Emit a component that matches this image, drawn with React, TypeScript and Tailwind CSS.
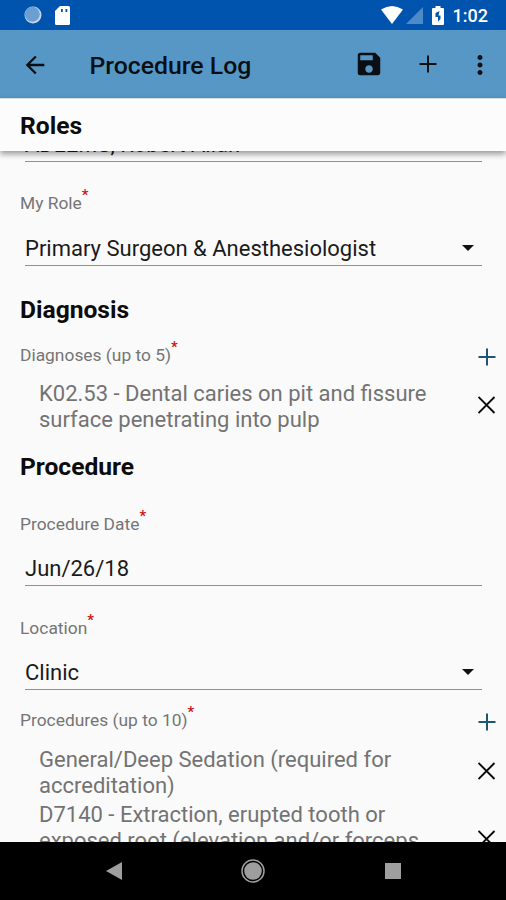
import React from 'react';
import { MdArrowBack, MdSave, MdMoreVert } from 'react-icons/md';

const PlusIcon = ({ className }: { className: string }) => (
  <svg viewBox="0 0 18 18" className={className} stroke="currentColor" strokeWidth="2">
    <path d="M9 .5v17M.5 9h17" />
  </svg>
);

const CloseIcon = () => (
  <svg viewBox="0 0 18 18" className="-mt-px mb-px w-[18px] h-[18px]" stroke="#0c0c0c" strokeWidth="1.9">
    <path d="M.5 1l16 16M16.500 1l-16 16" />
  </svg>
);

const SectionTitle = ({ children }: { children: React.ReactNode }) => (
  <h2 className="-ml-px text-[24.6px] leading-[28px] font-bold text-[#0c0c0c]">{children}</h2>
);

const Label = ({ children }: { children: React.ReactNode }) => (
  <div className="-ml-px flex h-5 text-[17.4px] leading-5 text-[#757575]">
    <span>{children}</span>
    <span className="-mt-2 text-[15px] leading-5 font-medium text-[#d01010]">*</span>
  </div>
);

const Field = ({ value, select }: { value: string; select?: boolean }) => (
  <div className="ml-1 mr-6 flex h-[35px] items-start justify-between border-b border-[#8f8f8f] text-[22px] leading-[35px] text-[#1a1a1a]">
    <span>{value}</span>
    {select && (
      <svg viewBox="0 0 12 6" className="mt-[14px] mr-2 w-3 h-1.5">
        <path d="M0 0h12L6 6z" fill="#111" />
      </svg>
    )}
  </div>
);

const Item = ({ lines }: { lines: string[] }) => (
  <div className="flex items-center justify-between pl-[18px] pr-[10px] text-[22px] leading-[26px] text-[#737373]">
    <div className="mt-px -mb-px whitespace-nowrap">
      {lines.map((line) => (
        <p key={line}>{line}</p>
      ))}
    </div>
    <CloseIcon />
  </div>
);

const ListLabel = ({ children }: { children: React.ReactNode }) => (
  <div className="flex h-5 items-end justify-between pr-[10px]">
    <Label>{children}</Label>
    <PlusIcon className="-mb-px w-[18px] h-[18px] text-[#1f5570]" />
  </div>
);

const StatusBar = () => (
  <div className="flex h-[30px] shrink-0 items-center bg-[#0054ae] text-white">
    <svg viewBox="0 0 18 18" className="ml-[23.5px] w-[18px] h-[18px]">
      <circle cx="9" cy="9" r="8.5" fill="#c4d8ee" />
      <circle cx="8.3" cy="8.3" r="7.5" fill="#6b9fd3" />
    </svg>
    <svg viewBox="0 0 15 19" className="ml-[13px] w-[15px] h-[19px]">
      <path d="M5 0h8.500q1.500 0 1.500 1.500v16q0 1.500-1.500 1.500h-12q-1.500 0-1.500-1.500V5z" fill="#fff" />
      <path d="M6 3h1.800v3H6zM10.500 3h1.800v3h-1.800z" fill="#0054ae" />
    </svg>
    <svg viewBox="0 0 22 18" className="ml-auto w-[22px] h-[18px]">
      <path d="M0 3.500Q11-3.500 22 3.500L11 18z" fill="#fff" />
    </svg>
    <svg viewBox="0 0 17 17" className="ml-[3px] mt-px w-[17px] h-[17px]">
      <path d="M17 0v17H0z" fill="#4d8ac8" />
    </svg>
    <svg viewBox="0 0 12 19" className="ml-[9px] w-3 h-[19px]">
      <path d="M3.500 0h5v2H11q1 0 1 1v15q0 1-1 1H1q-1 0-1-1V3q0-1 1-1h2.500z" fill="#fff" />
      <path d="M7.500 5L3.500 7v4h2.500v4.500L8.500 13V9.500H6.500z" fill="#0054ae" />
    </svg>
    <span className="mt-0.5 ml-[9px] mr-[18px] text-[18px] leading-none font-medium">1:02</span>
  </div>
);

const AppBar = () => (
  <header className="flex h-[68px] shrink-0 items-center bg-[#5797c6] text-[#0a0f14]">
    <MdArrowBack className="ml-[21px] mt-0.5 w-[28px] h-[28px]" />
    <h1 className="ml-[40.5px] mt-[5px] text-[24.8px] leading-none font-medium">Procedure Log</h1>
    <MdSave className="ml-auto w-[30px] h-[30px]" />
    <PlusIcon className="ml-[35px] mr-[7px] w-[18px] h-[18px]" />
    <MdMoreVert className="ml-[21px] mr-[11px] mt-px w-[30px] h-[30px]" />
  </header>
);

const NavBar = () => (
  <nav className="flex h-[58px] shrink-0 items-center bg-black">
    <svg viewBox="0 0 16 18" className="ml-[105.500px] w-4 h-[18px]">
      <path d="M16 0v18L0 9z" fill="#9e9e9e" />
    </svg>
    <svg viewBox="0 0 24 24" className="ml-[119.500px] w-6 h-6">
      <circle cx="12" cy="12" r="11" fill="none" stroke="#9e9e9e" strokeWidth="1.5" />
      <circle cx="12" cy="12" r="8.800" fill="#9e9e9e" />
    </svg>
    <div className="ml-[120px] h-4 w-4 bg-[#9e9e9e]" />
  </nav>
);

const App: React.FC = () => {
  return (
    <div className="flex h-[900px] w-[506px] flex-col overflow-hidden bg-[#fafafa] font-['Roboto',sans-serif]">
      <StatusBar />
      <AppBar />
      <div className="z-10 flex h-[53px] shrink-0 items-center border-t border-[#d5dde2] bg-[#fcfcfc] pl-[21px] pt-0.5 shadow-[0_3px_6px_rgba(0,0,0,0.4)]">
        <SectionTitle>Roles</SectionTitle>
      </div>
      <main className="min-h-0 flex-1 overflow-hidden pl-[21px]">
        <div className="-mt-[24px]">
          <Field value="ADLEMS, Robert Allan" />
        </div>
        <div className="mt-[31px]">
          <Label>My Role</Label>
        </div>
        <div className="mt-[18px]">
          <Field value="Primary Surgeon & Anesthesiologist" select />
        </div>
        <div className="mt-[30px]">
          <SectionTitle>Diagnosis</SectionTitle>
        </div>
        <div className="mt-[21px]">
          <ListLabel>Diagnoses (up to 5)</ListLabel>
        </div>
        <div className="mt-[15px]">
          <Item lines={['K02.53 - Dental caries on pit and fissure', 'surface penetrating into pulp']} />
        </div>
        <div className="mt-[21px]">
          <SectionTitle>Procedure</SectionTitle>
        </div>
        <div className="mt-[33px]">
          <Label>Procedure Date</Label>
        </div>
        <div className="mt-[17px]">
          <Field value="Jun/26/18" />
        </div>
        <div className="mt-8">
          <Label>Location</Label>
        </div>
        <div className="mt-[17px]">
          <Field value="Clinic" select />
        </div>
        <div className="mt-5">
          <ListLabel>Procedures (up to 10)</ListLabel>
        </div>
        <div className="mt-4 flex flex-col gap-[3px]">
          <Item lines={['General/Deep Sedation (required for', 'accreditation)']} />
          <Item lines={['D7140 - Extraction, erupted tooth or', 'exposed root (elevation and/or forceps', 'removal)']} />
        </div>
      </main>
      <NavBar />
    </div>
  );
};

export default App;
